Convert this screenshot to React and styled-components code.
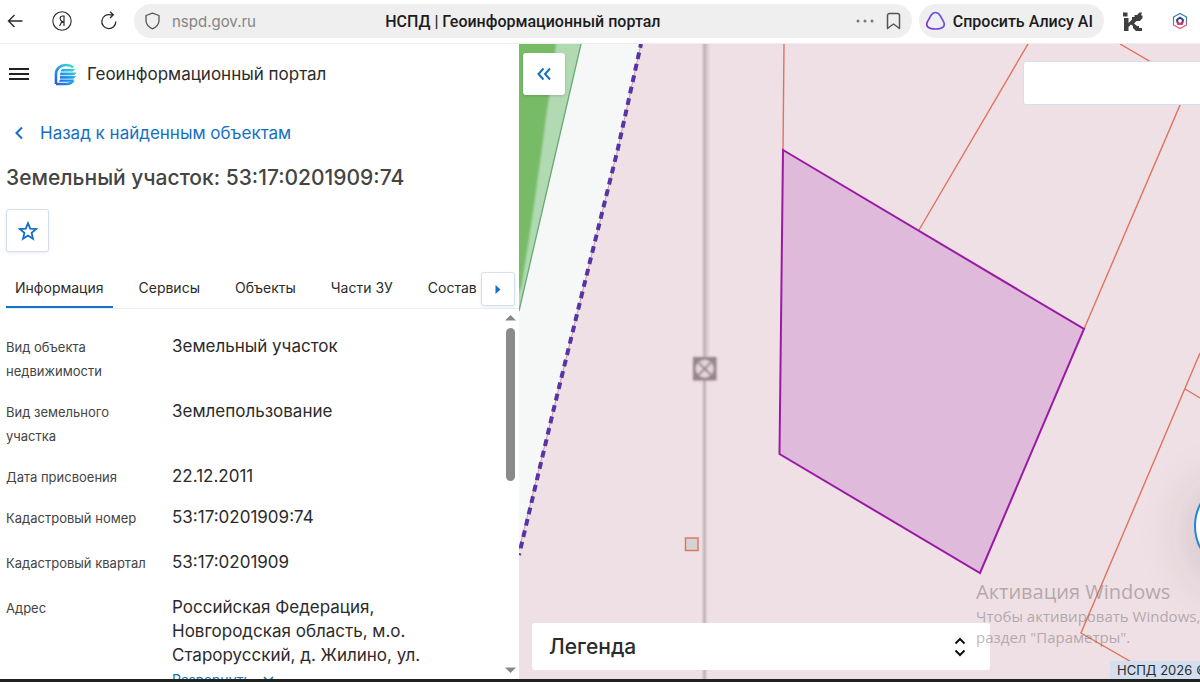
import React from 'react';
import styled, { createGlobalStyle } from 'styled-components';

const Colors = {
  BLUE: '#1470c4',
  TEXT: '#2b2b2b',
  GREY: '#444444',
  BORDER: '#d5dfee',
  PINK: '#eee0e4',
  PARCEL: '#e0735c',
};

const GlobalStyle = createGlobalStyle`
  * {
    box-sizing: border-box;
  }
  body {
    margin: 0;
    font-family: Inter, 'Liberation Sans', sans-serif;
    color: ${Colors.TEXT};
  }
  button, input {
    font-family: inherit;
    color: inherit;
    padding: 0;
    border: 0;
  }
  svg {
    display: block;
    flex-shrink: 0;
  }
`;

const Page = styled.div`
  height: 100vh;
  display: flex;
  flex-direction: column;
  overflow: hidden;
  background: #ffffff;
  border-bottom: 3px solid #20221f;
`;

/* browser bar */

const BrowserBar = styled.header`
  flex: 0 0 44px;
  display: flex;
  align-items: center;
  padding: 0 11px 1px 6px;
  border-bottom: 1px solid #ededed;
  font-family: Roboto, 'Liberation Sans', sans-serif;
`;

const NavButtons = styled.div`
  display: flex;
  gap: 28px;
  margin-right: 16px;
`;

const PlainButton = styled.button`
  display: flex;
  align-items: center;
  justify-content: center;
  background: none;
  cursor: pointer;
`;

const AddressBar = styled.div`
  flex: 1;
  height: 34px;
  display: flex;
  align-items: center;
  padding: 0 10px;
  border-radius: 17px;
  background: #efefef;
`;

const AddressSide = styled.div`
  flex: 1;
  display: flex;
  align-items: center;
  justify-content: ${(props) => (props.$end ? 'flex-end' : 'flex-start')};
  gap: 11px;
`;

const Address = styled.span`
  font-size: 15px;
  font-family: Inter, sans-serif;
  color: #858585;
`;

const PageTitle = styled.span`
  font-size: 16px;
  font-weight: 500;
  color: #1c1c1c;
  white-space: nowrap;
`;

const AliceButton = styled(PlainButton)`
  height: 34px;
  gap: 7px;
  margin: 0 19px 0 7px;
  padding: 0 11px 0 6px;
  border-radius: 17px;
  background: #efefef;
  font-size: 16px;
  font-weight: 500;
  color: #1c1c1c;
  white-space: nowrap;
`;

const Extensions = styled.div`
  display: flex;
  align-items: center;
  gap: 28px;
`;

/* left panel */

const Main = styled.main`
  flex: 1;
  min-height: 0;
  display: grid;
  grid-template-columns: minmax(0, 519fr) minmax(0, 681fr);
`;

const Panel = styled.section`
  min-height: 0;
  display: flex;
  flex-direction: column;
  background: #ffffff;
`;

const PanelHeader = styled.div`
  flex: 0 0 60px;
  display: flex;
  align-items: center;
  padding-left: 9px;
`;

const LogoBox = styled.div`
  display: flex;
  align-items: center;
  margin-left: 25px;
`;

const PortalName = styled.span`
  margin-left: 10px;
  font-size: 17px;
`;

const BackLink = styled.a`
  display: flex;
  align-items: center;
  gap: 14px;
  height: 32px;
  margin-top: 13px;
  padding-left: 13px;
  font-size: 17px;
  color: ${Colors.BLUE};
  text-decoration: none;
`;

const ObjectTitle = styled.h1`
  margin: 13px 6px 15px;
  font-size: 21px;
  line-height: 32px;
  font-weight: 500;
  color: ${Colors.GREY};
  white-space: nowrap;
`;

const SquareButton = styled(PlainButton)`
  flex-shrink: 0;
  width: ${(props) => props.$size}px;
  height: ${(props) => props.$size}px;
  border: 1px solid ${Colors.BORDER};
  border-radius: 3px;
  background: #ffffff;
  box-shadow: 0 1px 3px rgba(60, 90, 140, 0.12);
`;

const Actions = styled.div`
  padding: 0 6px;
`;

const TabBar = styled.div`
  flex: 0 0 40px;
  display: flex;
  align-items: flex-start;
  justify-content: space-between;
  margin: 17px 0 0 6px;
  padding: 3px 4px 0 0;
  border-bottom: 1px solid #ebeef2;
`;

const Tabs = styled.div`
  display: flex;
  gap: 17px;
  min-width: 0;
  overflow: hidden;
`;

const Tab = styled.button`
  height: 36px;
  padding: 0 9px 4px;
  border-bottom: 2px solid ${(props) => (props.$active ? Colors.BLUE : 'transparent')};
  background: none;
  font-size: 14px;
  white-space: nowrap;
  cursor: pointer;
`;

const Scroller = styled.div`
  flex: 1;
  min-height: 0;
  display: flex;
  overflow: hidden;
`;

const Details = styled.dl`
  flex: 1;
  margin: 0;
  padding: 9px 0 0 6px;
`;

const DetailRow = styled.div`
  display: grid;
  grid-template-columns: 166px 250px;
  margin-top: ${(props) => (props.$loose ? 20 : 16)}px;
  line-height: 24px;
`;

const DetailLabel = styled.dt`
  padding: 1px 20px 0 0;
  font-size: 13px;
  line-height: 24px;
  color: ${Colors.GREY};
`;

const DetailValue = styled.dd`
  margin: 0;
  font-size: 17px;
`;

const ExpandButton = styled(PlainButton)`
  gap: 12px;
  height: 24px;
  font-size: 14px;
  color: ${Colors.BLUE};
`;

const ScrollTrack = styled.div`
  width: 17px;
  display: flex;
  flex-direction: column;
  align-items: center;
  padding: 6px 0;
`;

const ScrollThumb = styled.div`
  width: 9px;
  height: 153px;
  margin: 7px 0 auto;
  border-radius: 5px;
  background: #8b8b8b;
`;

/* map */

const MapArea = styled.section`
  position: relative;
  min-width: 0;
  overflow: hidden;
  background: ${Colors.PINK};
`;

const MapSvg = styled.svg`
  position: absolute;
  inset: 0;
  width: 100%;
  height: 100%;
`;

const CollapseButton = styled(PlainButton)`
  position: absolute;
  top: 9px;
  left: 4px;
  width: 42px;
  height: 42px;
  border-radius: 3px;
  background: #ffffff;
  box-shadow: 0 1px 3px rgba(0, 0, 0, 0.15);
`;

const SearchInput = styled.input`
  position: absolute;
  top: 17px;
  right: -23px;
  width: 200px;
  height: 44px;
  border: 1px solid ${Colors.BORDER};
  border-radius: 3px;
  background: #ffffff;
`;

const RoundButton = styled.button`
  position: absolute;
  right: -88px;
  bottom: 106px;
  width: 94px;
  height: 94px;
  border: 2px solid #1d86e0;
  border-radius: 50%;
  background: #ffffff;
  box-shadow: 0 8px 60px rgba(60, 30, 40, 0.2);
`;

const Legend = styled.button`
  position: absolute;
  left: 13px;
  right: 210px;
  bottom: 9px;
  height: 47px;
  display: flex;
  align-items: center;
  justify-content: space-between;
  padding: 0 24px 0 17px;
  border-radius: 3px;
  background: #ffffff;
  font-size: 21px;
  font-weight: 500;
  cursor: pointer;
`;

const Copyright = styled.div`
  position: absolute;
  right: 0;
  bottom: 0;
  width: 90px;
  padding-left: 7px;
  background: #d3deee;
  font-size: 13px;
  line-height: 18px;
  white-space: nowrap;
`;

const Activation = styled.div`
  position: absolute;
  right: 0;
  bottom: 31px;
  width: 224px;
  font-family: 'Open Sans', 'Noto Sans', sans-serif;
  font-size: 15px;
  line-height: 21px;
  color: rgba(120, 110, 116, 0.5);
  white-space: nowrap;
  pointer-events: none;
`;

const ActivationTitle = styled.div`
  font-size: 20px;
  line-height: 28px;
`;

const tabs = ['Информация', 'Сервисы', 'Объекты', 'Части ЗУ', 'Состав'];

const details = [
  { label: 'Вид объекта недвижимости', value: 'Земельный участок' },
  { label: 'Вид земельного участка', value: 'Землепользование' },
  { label: 'Дата присвоения', value: '22.12.2011' },
  { label: 'Кадастровый номер', value: '53:17:0201909:74' },
  { label: 'Кадастровый квартал', value: '53:17:0201909', loose: true },
  {
    label: 'Адрес',
    value: 'Российская Федерация, Новгородская область, м.о. Старорусский, д. Жилино, ул.',
    loose: true,
    expandable: true,
  },
];

const BackIcon = () => (
  <svg width="18" height="20" viewBox="0 0 18 20" fill="none" stroke="#2b2b2b" strokeWidth="1.4">
    <path d="M16.500 10H2.500M8.500 4L2.500 10l6 6" />
  </svg>
);

const YandexIcon = () => (
  <svg width="20" height="20" viewBox="0 0 20 20" fill="none" stroke="#2b2b2b">
    <circle cx="10" cy="10" r="9.200" strokeWidth="1.100" />
    <path d="M12 15V5h-1.300c-1.700 0-2.600 1-2.600 2.500 0 1.500.8 2.200 1.800 2.800l2.100 1.200M9.900 10.500L7.600 15" strokeWidth="1.200" />
  </svg>
);

const ReloadIcon = () => (
  <svg width="18" height="20" viewBox="0 0 18 20" fill="none" stroke="#2b2b2b" strokeWidth="1.300">
    <path d="M15.800 10.500a7 7 0 1 1-5.300-6.700h2.500M10 .8l3.300 3-3.200 3.200" />
  </svg>
);

const ShieldIcon = () => (
  <svg width="17" height="18" viewBox="0 0 17 18" fill="none" stroke="#555" strokeWidth="1.300" strokeLinejoin="round">
    <path d="M8.500 1.200l6.500 2.300v5c0 3.700-2.500 6.400-6.500 8.300C4.500 14.900 2 12.200 2 8.500v-5z" />
  </svg>
);

const AliceIcon = () => (
  <svg width="21" height="20" viewBox="0 0 21 20" fill="none">
    <defs>
      <linearGradient id="alice" x1="0" y1="1" x2="1" y2="0">
        <stop offset="0" stopColor="#7a35c9" />
        <stop offset="1" stopColor="#6660ee" />
      </linearGradient>
    </defs>
    <path
      d="M10.500 1.500c2 0 3.400 1 4.600 3l3.400 6.200c2.100 4-.2 7.300-8 7.300s-10.100-3.300-8-7.300l3.400-6.200c1.200-2 2.600-3 4.600-3z"
      stroke="url(#alice)"
      strokeWidth="1.700"
    />
  </svg>
);

const KIcon = () => (
  <svg width="20" height="19" viewBox="0 0 20 19" fill="#3f3f3f">
    <path d="M0 .5h4.500v4H0zM1 6h4.500v5L9 7.500V5h2.500V3H14l2.500-2.500H19l-1 3h1.500V6L17 9h-3.500L11 11.500l3 2.500h2v2h3v3h-6l-3-3v-2l-2-1.500L5.500 15v4H1z" />
  </svg>
);

const HexIcon = () => (
  <svg width="18" height="18" viewBox="0 0 18 18" fill="none">
    <defs>
      <linearGradient id="hex" x1="0" y1="0" x2="0" y2="1">
        <stop offset="0.300" stopColor="#2b7fb4" />
        <stop offset="0.900" stopColor="#ec5573" />
      </linearGradient>
    </defs>
    <path d="M9 1.500l6.500 3.600v7.800L9 16.500l-6.500-3.600V5.100z" stroke="url(#hex)" strokeWidth="1.200" strokeLinejoin="round" />
    <circle cx="9" cy="9" r="2.800" stroke="#293f80" strokeWidth="1.800" />
    <path d="M6.300 9.800c.4 1.400 1.400 2 2.700 2s2.300-.6 2.700-2" stroke="#d93568" strokeWidth="1.900" />
    <path d="M9 4.800v1.500M5.300 7.800l1.300.4M12.700 7.800l-1.300.4" stroke="#293f80" strokeWidth="1.600" />
    <path d="M6.500 12.800l.8-1.200M11.500 12.800l-.8-1.200" stroke="#d93568" strokeWidth="1.600" />
  </svg>
);

const PortalLogo = () => (
  <svg width="23" height="23" viewBox="0 0 23 23">
    <defs>
      <linearGradient id="portal" x1="0" y1="1" x2="1" y2="0">
        <stop offset="0" stopColor="#2461dc" />
        <stop offset="0.500" stopColor="#22a3ee" />
        <stop offset="1" stopColor="#43dfc5" />
      </linearGradient>
    </defs>
    <path
      d="M2 21V11C2 5.500 6.500 2 12 2c3 0 5.500.8 7.200 2.300M2 21h10c3.500 0 6-1.200 7.600-3.600"
      fill="none"
      stroke="url(#portal)"
      strokeWidth="2.600"
    />
    <path
      d="M8 6h13c-1 1.800-2 2.600-3.500 2.600H6.500zM6.300 9.500H22.500c-1 1.900-2 2.700-3.500 2.700H6zM6 13.100h16c-1 1.900-2 2.700-3.500 2.700H6zM6 16.600h14c-1 1.600-2 2.200-3.500 2.200H5z"
      fill="url(#portal)"
    />
  </svg>
);

const DoubleChevron = () => (
  <svg width="16" height="16" viewBox="0 0 16 16" fill="none" stroke="#1470c4" strokeWidth="2">
    <path d="M7.500 2.500L2.500 8l5 5.500M14 2.500L9 8l5 5.500" />
  </svg>
);

const Arrow = ({ down }) => (
  <svg width="11" height="6" viewBox="0 0 11 6" fill="#888">
    <path d={down ? 'M0 .5h11l-5.500 5.500z' : 'M0 5.500h11L5.500 0z'} />
  </svg>
);

// координаты карты заданы от угла окна, поэтому сдвиг группы
const MapDrawing = () => (
  <MapSvg aria-hidden="true">
    <defs>
      <filter id="soft" x="-50%" y="-5%" width="200%" height="110%">
        <feGaussianBlur stdDeviation="0.800" />
      </filter>
    </defs>
    <g transform="translate(-519 -44)" fill="none">
      <path d="M519 44H641L617.600 150 581.700 295 553.500 410 519 550z" fill="#f6f7f7" />
      <path d="M519 44H581L554 160 519 311z" fill="#b1dab3" />
      <path d="M510 34H556V44L551 85 547 110 541 155 534 205 528 245 521 288 510 306z" fill="#77bb66" filter="url(#soft)" />
      <path d="M581 44L554 160 519 311" stroke="#68a97a" strokeWidth="1.300" />

      <path d="M641 44L617.600 150 581.700 295 553.500 410 519 550" stroke="#d09aa5" />
      <path
        d="M641 44L617.600 150 581.700 295 553.500 410 519 555"
        stroke="#5634a8"
        strokeWidth="4"
        strokeDasharray="6.800 4.900"
        strokeDashoffset="3"
      />

      <g filter="url(#soft)">
        <path d="M707 30V357" stroke="#dccfd4" strokeWidth="4" />
        <path d="M704.500 30V700" stroke="#bfb0b5" strokeWidth="3" />
        <rect x="693" y="357" width="23.500" height="23.500" fill="#96838b" />
        <circle cx="704.700" cy="368.700" r="9" fill="#e2d6da" />
        <path d="M698.500 362.500l12.500 12.500M711 362.500L698.500 375" stroke="#96838b" strokeWidth="1.800" />
      </g>

      <g stroke={Colors.PARCEL} strokeWidth="1.400">
        <path d="M784 44L783 150M1028 44L919 230M1120 44L1180 79V105L1084 329" />
        <path d="M1200 353L1081 633 1161 679M1185 389L1200 398" />
        <rect x="685.500" y="538" width="12.500" height="12.500" fill="#d6d3d4" />
      </g>
      <path d="M783 150L1084 329 980 573 779.500 454z" fill="#dfbada" stroke="#9a1aa5" strokeWidth="2" />
    </g>
  </MapSvg>
);

const App = () => {
  return (
    <Page>
      <GlobalStyle />
      <BrowserBar>
        <NavButtons>
          <PlainButton aria-label="Назад"><BackIcon /></PlainButton>
          <PlainButton aria-label="Яндекс"><YandexIcon /></PlainButton>
          <PlainButton aria-label="Обновить"><ReloadIcon /></PlainButton>
        </NavButtons>
        <AddressBar>
          <AddressSide>
            <ShieldIcon />
            <Address>nspd.gov.ru</Address>
          </AddressSide>
          <PageTitle>НСПД | Геоинформационный портал</PageTitle>
          <AddressSide $end>
            <PlainButton aria-label="Ещё">
              <svg width="18" height="4" viewBox="0 0 18 4" fill="#777">
                <circle cx="2" cy="2" r="1.500" />
                <circle cx="9" cy="2" r="1.500" />
                <circle cx="16" cy="2" r="1.500" />
              </svg>
            </PlainButton>
            <PlainButton aria-label="Закладка">
              <svg width="17" height="18" viewBox="0 0 17 18" fill="none" stroke="#555" strokeWidth="1.500">
                <path d="M2.500 16.500V3.500a2 2 0 0 1 2-2h8a2 2 0 0 1 2 2v13l-6-4.500z" strokeLinejoin="round" />
              </svg>
            </PlainButton>
          </AddressSide>
        </AddressBar>
        <AliceButton>
          <AliceIcon />
          Спросить Алису AI
        </AliceButton>
        <Extensions>
          <KIcon />
          <HexIcon />
        </Extensions>
      </BrowserBar>

      <Main>
        <Panel>
          <PanelHeader>
            <PlainButton aria-label="Меню">
              <svg width="20" height="16" viewBox="0 0 20 16" stroke="#222" strokeWidth="2">
                <path d="M0 3h20M0 8h20M0 13h20" />
              </svg>
            </PlainButton>
            <LogoBox>
              <PortalLogo />
              <PortalName>Геоинформационный портал</PortalName>
            </LogoBox>
          </PanelHeader>

          <BackLink href="#">
            <svg width="13" height="14" viewBox="0 0 13 14" fill="none" stroke="#1470c4" strokeWidth="2">
              <path d="M9 1.500L3.500 7 9 12.500" />
            </svg>
            Назад к найденным объектам
          </BackLink>
          <ObjectTitle>Земельный участок: 53:17:0201909:74</ObjectTitle>
          <Actions>
            <SquareButton $size={43} aria-label="В избранное">
              <svg width="20" height="20" viewBox="0 0 20 20" fill="none" stroke="#1470c4" strokeWidth="1.800">
                <path d="M10 2.200l2.200 5.500 5.900.4-4.500 3.800 1.400 5.800-5-3.200-5 3.200 1.400-5.800L1.900 8.100l5.900-.4z" />
              </svg>
            </SquareButton>
          </Actions>

          <TabBar>
            <Tabs role="tablist">
              {tabs.map((tab, i) => (
                <Tab key={tab} role="tab" aria-selected={i === 0} $active={i === 0}>
                  {tab}
                </Tab>
              ))}
            </Tabs>
            <SquareButton $size={34} aria-label="Следующие вкладки">
              <svg width="6" height="9" viewBox="0 0 6 9" fill="#1470c4">
                <path d="M.5 0L5.500 4.500.5 9z" />
              </svg>
            </SquareButton>
          </TabBar>

          <Scroller>
            <Details>
              {details.map((item) => (
                <DetailRow key={item.label} $loose={item.loose}>
                  <DetailLabel>{item.label}</DetailLabel>
                  <DetailValue>
                    {item.value}
                    {item.expandable && (
                      <ExpandButton>
                        Развернуть
                        <svg width="11" height="7" viewBox="0 0 11 7" fill="none" stroke="#1470c4" strokeWidth="1.600">
                          <path d="M1 1l4.500 4.500L10 1" />
                        </svg>
                      </ExpandButton>
                    )}
                  </DetailValue>
                </DetailRow>
              ))}
            </Details>
            <ScrollTrack>
              <Arrow />
              <ScrollThumb />
              <Arrow down />
            </ScrollTrack>
          </Scroller>
        </Panel>

        <MapArea>
          <MapDrawing />
          <CollapseButton aria-label="Свернуть панель"><DoubleChevron /></CollapseButton>
          <SearchInput type="text" aria-label="Поиск" />
          <RoundButton aria-label="Помощник" />
          <Legend>
            Легенда
            <svg width="12" height="20" viewBox="0 0 12 20" fill="none" stroke="#111" strokeWidth="2">
              <path d="M1.500 6.500L6 2l4.500 4.500M1.500 13.500L6 18l4.500-4.500" />
            </svg>
          </Legend>
          <Copyright>НСПД 2026 ©</Copyright>
          <Activation>
            <ActivationTitle>Активация Windows</ActivationTitle>
            <div>Чтобы активировать Windows, перейдите в</div>
            <div>раздел "Параметры".</div>
          </Activation>
        </MapArea>
      </Main>
    </Page>
  );
};

export default App;
